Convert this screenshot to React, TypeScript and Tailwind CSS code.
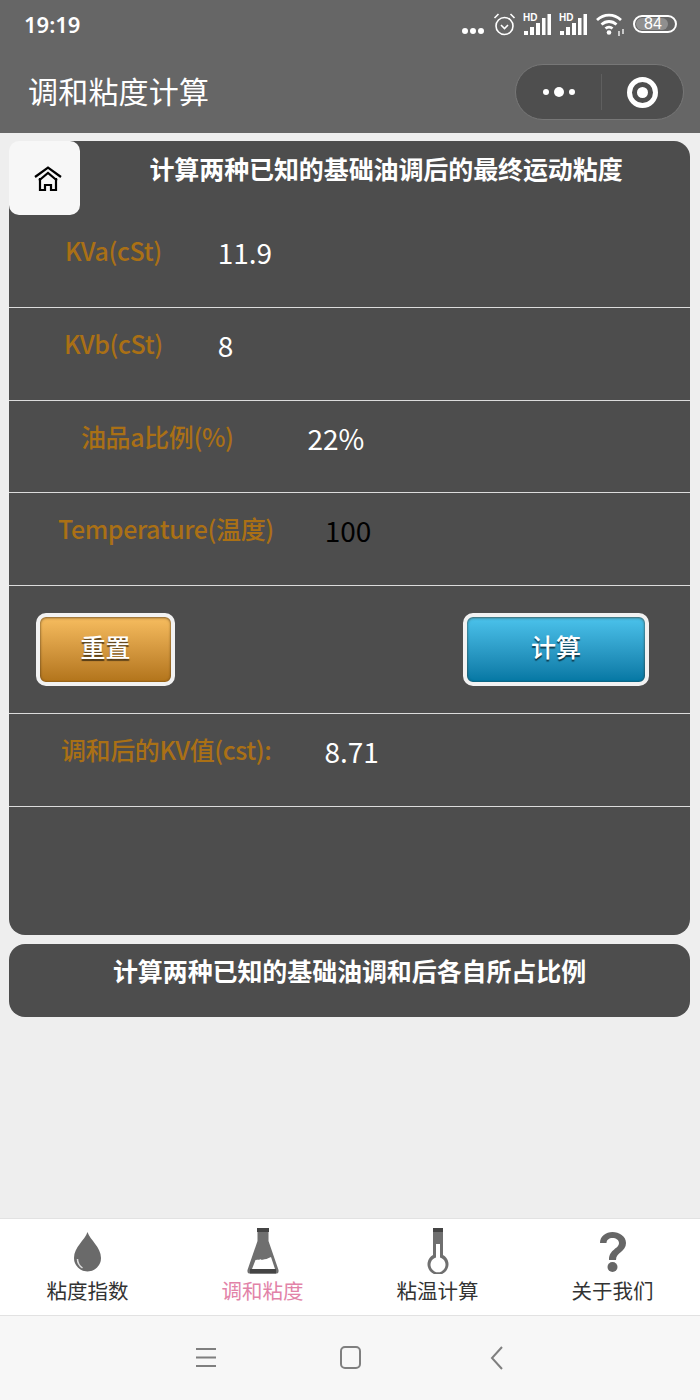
import type { ReactNode } from "react";

const cjk = "font-['Noto_Sans_CJK_SC','Noto_Sans',sans-serif]";

function Row({ label, value, pl, gap, dark, h = "h-[93px]" }: { label: string; value: string; pl: string; gap: string; dark?: boolean; h?: string }) {
  return (
    <div className={`flex items-start border-b border-[#dcdcdc] ${h}`}>
      <div className={`flex items-start pt-[13px] ${pl}`}>
        <span className="text-[25px] leading-[44px] font-medium tracking-[-0.4px] whitespace-nowrap text-[#aa7015]">{label}</span>
        <span className={`text-[28px] leading-[48px] ${gap} ${dark ? "text-black" : "text-white"}`}>{value}</span>
      </div>
    </div>
  );
}

function Btn({ children, className }: { children: ReactNode; className: string }) {
  return (
    <button className={`flex h-[73px] items-center justify-center rounded-[10px] border-4 border-[#f2f2f2] pb-[5px] text-[25px] font-medium text-white shadow-[inset_0_1px_3px_rgba(60,40,20,0.55),inset_0_0_2px_rgba(60,40,20,0.5)] [text-shadow:0_2px_1px_rgba(0,0,0,0.6)] ${className}`}>
      {children}
    </button>
  );
}

function StatusIcons() {
  return (
    <div className="flex items-center gap-[7px]">
      <svg width="24" height="24" viewBox="0 0 24 24" fill="#fff" className="mr-[1px]">
        <circle cx="4" cy="19" r="3" />
        <circle cx="12" cy="19" r="3" />
        <circle cx="20" cy="19" r="3" />
      </svg>
      <svg width="23" height="24" viewBox="0 0 23 24" fill="none" stroke="#fff" strokeWidth="1.6">
        <circle cx="11.500" cy="14" r="8.500" />
        <path d="M8 13l3.500 3.500 3.500-3.500M1.500 6l4-4M21.500 6l-4-4" />
      </svg>
      {[0, 1].map((i) => (
        <svg key={i} width="28" height="24" viewBox="0 0 28 24" fill="#fff" className={i === 1 ? "ml-[1px]" : ""}>
          <text x="0" y="9" fontSize="10" fontWeight="700" fontFamily="Liberation Sans, sans-serif">HD</text>
          <rect x="1" y="19" width="4" height="4" />
          <rect x="7" y="15" width="4" height="8" />
          <rect x="13" y="11" width="4" height="12" />
          <rect x="19" y="6" width="3.500" height="17" />
          <rect x="24.500" y="2" width="3.500" height="21" />
        </svg>
      ))}
      <svg width="29" height="24" viewBox="0 0 29 24" fill="none" stroke="#fff" strokeWidth="2.800" className="ml-[2px]">
        <path d="M1 8c7-6.500 17-6.500 24 0M5.500 12.500c4.500-4 10.500-4 15 0M9.500 16.500c2-1.800 5-1.800 7 0" />
        <circle cx="13" cy="20.500" r="2.300" fill="#fff" stroke="none" />
        <path d="M23 19v5M27 17v5" strokeWidth="1.300" />
      </svg>
      <div className="relative ml-[1px] flex h-[18px] w-[44px] items-center rounded-full border-2 border-white p-[1px]">
        <div className="h-full w-[84%] rounded-full bg-[#8f8f8f]" />
        <span className="absolute inset-0 pr-[4px] text-center font-['Liberation_Sans',sans-serif] text-[16px] leading-[14px] text-white">84</span>
      </div>
    </div>
  );
}

function Header() {
  return (
    <div className="h-[133px] bg-[#666666] px-[24px]">
      <div className="flex h-[48px] items-center justify-between">
        <span className="font-['Noto_Sans',sans-serif] text-[22px] font-semibold text-white">19:19</span>
        <div className="mr-[-1px]"><StatusIcons /></div>
      </div>
      <div className="mt-[16px] flex items-start justify-between">
        <span className="pl-[4px] text-[30px] leading-[52px] tracking-[0.2px] text-white">调和粘度计算</span>
        <div className="mr-[-8px] flex h-[56px] w-[169px] items-center rounded-full border border-[#777777] bg-[#4e4e4e]">
          <div className="flex w-[85px] items-center justify-center gap-[5px]">
            <span className="h-[6px] w-[6px] rounded-full bg-white" />
            <span className="h-[10px] w-[10px] rounded-full bg-white" />
            <span className="h-[6px] w-[6px] rounded-full bg-white" />
          </div>
          <div className="h-[36px] w-px bg-[#5f5f5f]" />
          <div className="flex flex-1 items-center justify-center">
            <div className="flex h-[31px] w-[31px] items-center justify-center rounded-full border-[5px] border-white">
              <span className="h-[11px] w-[11px] rounded-full bg-white" />
            </div>
          </div>
        </div>
      </div>
    </div>
  );
}

function TabBar() {
  const tabs = [
    {
      name: "粘度指数",
      icon: (
        <svg width="27" height="40" viewBox="0 0 27 40" className="mt-[4px]">
          <path d="M13.500 0c2.500 8 13.500 15 13.500 26a13.500 13.500 0 0 1-27 0C0 15 11 8 13.500 0z" fill="#6a6a6a" />
          <path d="M3.500 27c0 4 2 7 5 9" fill="none" stroke="#ddd" strokeWidth="1.500" />
        </svg>
      ),
    },
    {
      name: "调和粘度",
      active: true,
      icon: (
        <svg width="32" height="46" viewBox="0 0 32 46">
          <rect x="10" y="0" width="12" height="4" fill="#444" />
          <path d="M10.500 4h11v9l10 29q.5 3.500-2.500 3.500H3q-3 0-2.500-3.500l10-29z" fill="#6f6f6f" />
          <path d="M5 41l3.500-9c5-.5 9 .5 15.500-3l4 12z" fill="#fff" />
          <rect x="3" y="41" width="26" height="4.500" fill="#444" />
        </svg>
      ),
    },
    {
      name: "粘温计算",
      icon: (
        <svg width="22" height="46" viewBox="0 0 22 46" fill="none">
          <rect x="6" y="0" width="10" height="4" fill="#444" />
          <path d="M6 4h10v23a10.500 10.500 0 1 1-10 0z" fill="#6f6f6f" />
          <path d="M9 16h4v13.500a7.500 7.500 0 1 1-4 0z" fill="#fff" />
        </svg>
      ),
    },
    {
      name: "关于我们",
      icon: (
        <svg width="27" height="40" viewBox="0 0 27 40" fill="none" className="mt-[4px]">
          <path d="M1 11C1 4 7 0 13.500 0S27 4 27 11c0 9-10 9-10 17h-7c0-11 10-11 10-17 0-3-3-5-6.500-5S7.500 8 7.500 11z" fill="#666" />
          <circle cx="13.500" cy="35" r="5" fill="#666" />
        </svg>
      ),
    },
  ];
  return (
    <div className="grid h-[98px] grid-cols-4 border-y border-[#e2e2e2] bg-white">
      {tabs.map((t) => (
        <div key={t.name} className="flex flex-col items-center">
          <div className="flex h-[58px] items-start pt-[9px]">{t.icon}</div>
          <span className={`text-[20.5px] leading-[26px] ${t.active ? "text-[#e283a8]" : "text-[#333333]"}`}>{t.name}</span>
        </div>
      ))}
    </div>
  );
}

export default function App() {
  return (
    <div className={`flex h-[1400px] flex-col bg-[#eeeeee] ${cjk}`}>
      <Header />
      <div className="flex flex-1 flex-col gap-[9px] pt-[8px] pr-[10px] pl-[9px]">
        <div className="relative h-[794px] rounded-[16px] bg-[#4d4d4d]">
          <button className="absolute top-0 left-0 flex h-[74px] w-[71px] items-center justify-center rounded-[10px] bg-[#f7f7f7] pl-[7px]">
            <svg width="28" height="25" viewBox="0 0 28 25" fill="none" stroke="#000" strokeWidth="2.200">
              <path d="M1 11L14 1.500 27 11M5 14.500L14 7l9 7.500" />
              <path d="M6 12v12h5v-5h6v5h5V12" />
            </svg>
          </button>
          <div className="h-[74px] pt-[9px] pl-[73px] text-center text-[25px] leading-[36px] font-bold tracking-[-0.1px] text-white">
            计算两种已知的基础油调后的最终运动粘度
          </div>
          <Row label="KVa(cSt)" value="11.9" pl="pl-[56px]" gap="ml-[56px]" />
          <Row label="KVb(cSt)" value="8" pl="pl-[55px]" gap="ml-[55px]" />
          <Row label="油品a比例(%)" value="22%" pl="pl-[72px]" gap="ml-[74px]" h="h-[92px]" />
          <Row label="Temperature(温度)" value="100" pl="pl-[49px]" gap="ml-[51px]" dark />
          <div className="flex h-[128px] items-center justify-between border-b border-[#dcdcdc] pr-[41px] pb-[1px] pl-[27px]">
            <Btn className="w-[139px] bg-gradient-to-b from-[#f7bd5f] to-[#b2741a]">重置</Btn>
            <Btn className="w-[186px] bg-gradient-to-b from-[#4bc3ec] to-[#0377a3]">计算</Btn>
          </div>
          <Row label="调和后的KV值(cst):" value="8.71" pl="pl-[52px]" gap="ml-[53px]" />
        </div>
        <div className="h-[73px] rounded-[16px] bg-[#4d4d4d] pt-[8px] text-center text-[25px] leading-[36px] font-bold tracking-[-0.1px] text-white">
          计算两种已知的基础油调和后各自所占比例
        </div>
      </div>
      <TabBar />
      <div className="flex h-[84px] items-center justify-center bg-[#f7f7f7]">
        <svg width="320" height="30" viewBox="0 0 320 30" fill="none" stroke="#7f7f7f" strokeWidth="2">
          <path d="M6 6h20M6 14.500h20M6 23h20" />
          <rect x="151" y="4" width="19" height="21" rx="4" />
          <path d="M312 4l-10 11 10 11" />
        </svg>
      </div>
    </div>
  );
}
